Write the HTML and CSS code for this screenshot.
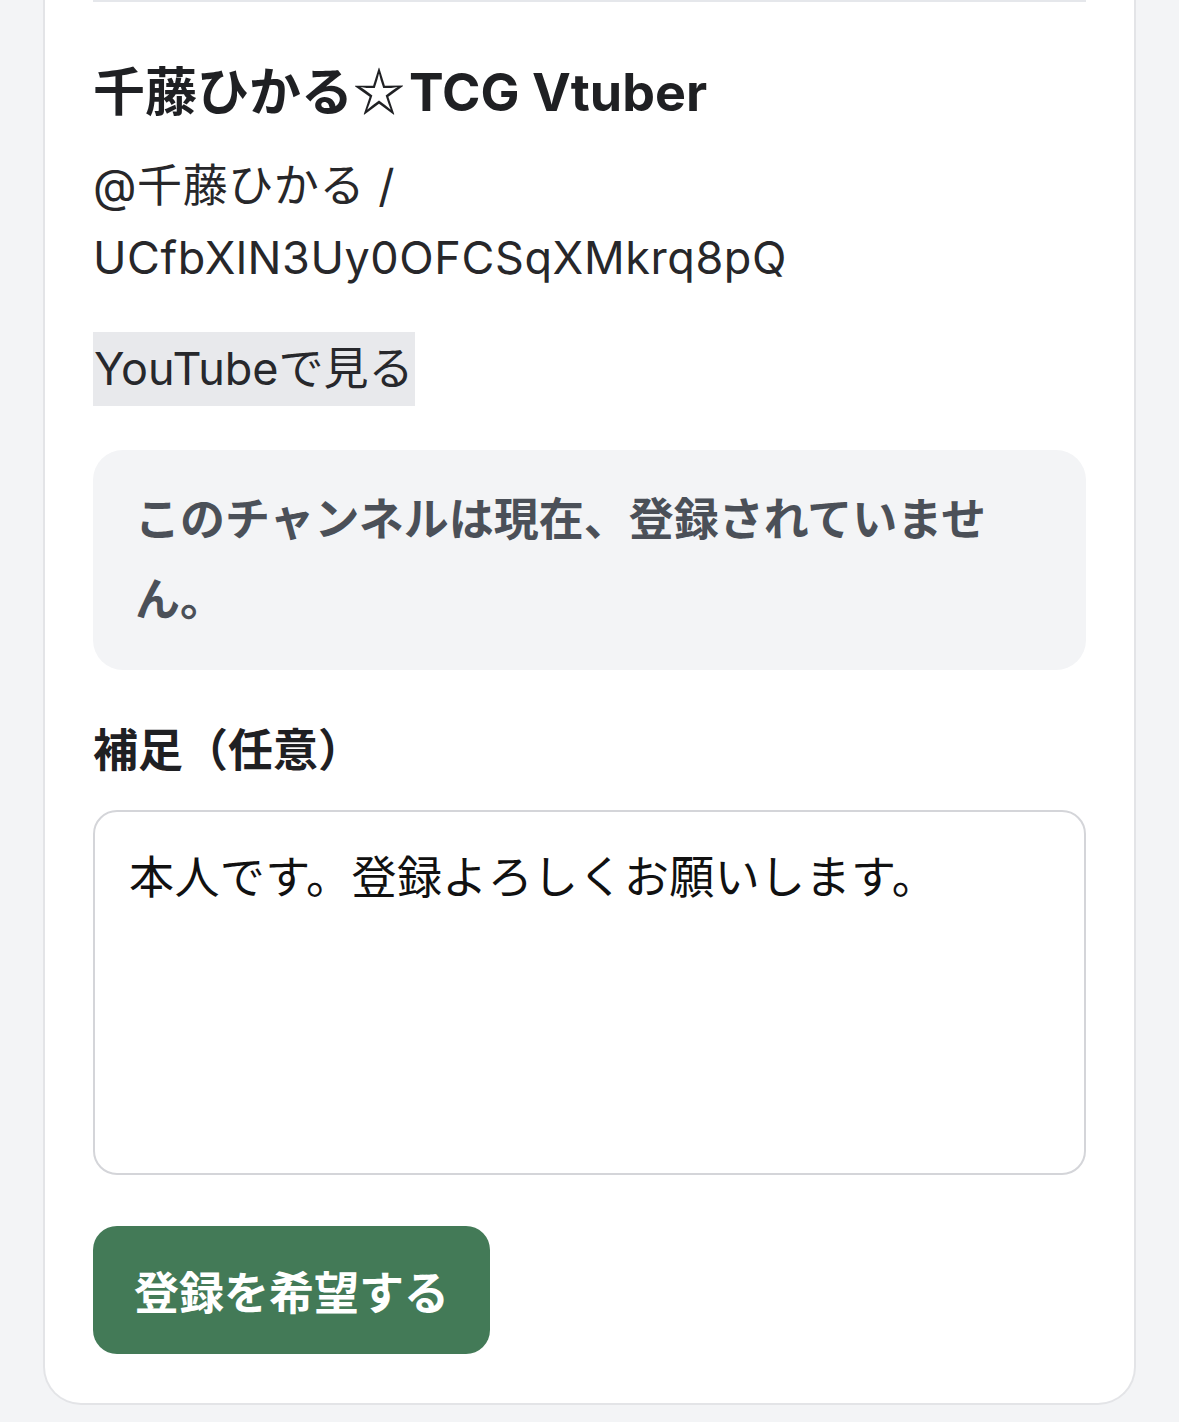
FILE: index.html
```html
<!DOCTYPE html>
<html lang="ja">
<head>
<meta charset="utf-8">
<title>チャンネル登録リクエスト</title>
<link rel="stylesheet" href="styles.css">
</head>
<body>
<div class="page">
  <div class="card">
    <section class="channel">
      <h2 class="title">千藤ひかる<span class="star">☆</span>TCG Vtuber</h2>
      <p class="handle">@千藤ひかる / UCfbXlN3Uy0OFCSqXMkrq8pQ</p>
      <div class="link-row"><a class="yt-link" href="#">YouTubeで見る</a></div>
      <div class="notice">このチャンネルは現在、登録されていません。</div>
      <label class="label" for="note">補足（任意）</label>
      <textarea id="note" class="note">本人です。登録よろしくお願いします。</textarea>
      <div class="actions"><button class="submit" type="button">登録を希望する</button></div>
    </section>
  </div>
</div>
</body>
</html>
```

FILE: styles.css
```css
* { box-sizing: border-box; }
html, body { margin: 0; padding: 0; }
body {
  background: #f3f4f6;
  font-family: Inter, "Noto Sans CJK JP", sans-serif;
  color: #27272a;
}
.page {
  padding: 0 43px 18px;
}
.card {
  background: #ffffff;
  border: 2px solid #e3e4e7;
  border-top: none;
  border-radius: 0 0 38px 38px;
  padding: 0 48px 49px;
}
.channel {
  border-top: 2px solid #e5e7eb;
  padding-top: 54px;
  display: flex;
  flex-direction: column;
  align-items: flex-start;
}
.title {
  margin: 0;
  height: 73px;
  font-size: 52px;
  line-height: 73px;
  font-weight: 700;
  color: #1f2023;
}
.star {
  font-family: "Noto Sans CJK JP", sans-serif;
  font-weight: 700;
  line-height: 1;
  margin-right: 4px;
}
.handle {
  margin: 21px 0 0;
  font-size: 45px;
  line-height: 72px;
  letter-spacing: 0.6px;
  color: #27272a;
  width: 640px;
}
.link-row {
  display: flex;
  margin-top: 38px;
}
.yt-link {
  display: block;
  background: #e8e9ec;
  color: #27282c;
  text-decoration: none;
  font-size: 45px;
  line-height: 74px;
  padding: 0 1px;
}
.notice {
  align-self: stretch;
  margin-top: 44px;
  background: #f3f4f6;
  border-radius: 30px;
  padding: 30px 42px;
  font-size: 45px;
  line-height: 80px;
  font-weight: 700;
  color: #4b5058;
}
.label {
  display: block;
  margin-top: 45px;
  font-size: 45px;
  line-height: 72px;
  font-weight: 700;
  color: #1f2023;
}
.note {
  display: block;
  align-self: stretch;
  margin-top: 23px;
  height: 365px;
  border: 2.5px solid #d4d5d9;
  border-radius: 24px;
  padding: 30px 34px;
  font-family: Inter, "Noto Sans CJK JP", sans-serif;
  font-size: 45px;
  line-height: 72px;
  letter-spacing: 0.4px;
  color: #111111;
  resize: none;
  outline: none;
  background: #ffffff;
}
.actions {
  display: flex;
  margin-top: 51px;
}
.submit {
  height: 128px;
  padding: 0 41px;
  border: none;
  border-radius: 24px;
  background: #437a57;
  color: #ffffff;
  font-family: Inter, "Noto Sans CJK JP", sans-serif;
  font-size: 45px;
  font-weight: 700;
}
```
